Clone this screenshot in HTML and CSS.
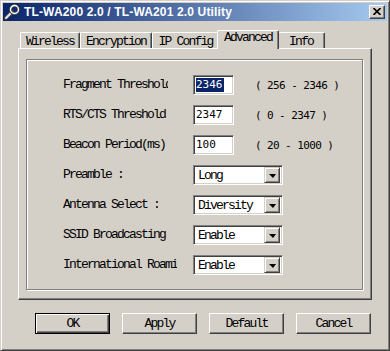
FILE: index.html
```html
<!DOCTYPE html>
<html lang="en">
<head>
    <meta charset="UTF-8">
    <title>TL-WA200 2.0 / TL-WA201 2.0 Utility</title>
    <link rel="stylesheet" href="styles.css">
</head>
<body>
    <div class="window">
        <div class="titlebar">
            <svg class="app-icon" width="16" height="16" viewBox="0 0 16 16">
                <path d="M2 14 L8 8" stroke="#404040" stroke-width="4" stroke-linecap="round"/>
                <path d="M2 14 L8 8" stroke="#e8e8e8" stroke-width="2" stroke-linecap="round"/>
                <circle cx="10.5" cy="5.5" r="4" fill="none" stroke="#404040" stroke-width="3"/>
                <circle cx="10.5" cy="5.5" r="4" fill="none" stroke="#ffffff" stroke-width="1.4"/>
            </svg>
            <span class="title">TL-WA200 2.0 / TL-WA201 2.0 Utility</span>
            <div class="close">
                <svg width="8" height="7" viewBox="0 0 8 7">
                    <path d="M0.5 0 L7.5 7 M7.5 0 L0.5 7" stroke="#000" stroke-width="1.6"/>
                </svg>
            </div>
        </div>

        <div class="content">
            <div class="tabs">
                <div class="tab t-wireless">Wireless</div>
                <div class="tab t-encryption">Encryption</div>
                <div class="tab t-ip">IP Config</div>
                <div class="tab t-advanced active">Advanced</div>
                <div class="tab t-info">Info</div>
            </div>

            <div class="sheet">
                <div class="group">
                    <div class="row">
                        <span class="label clip-frag">Fragment Threshold</span>
                        <div class="field sunken"><span class="selected">2346</span></div>
                        <span class="range">( 256 - 2346 )</span>
                    </div>
                    <div class="row">
                        <span class="label">RTS/CTS Threshold</span>
                        <div class="field sunken">2347</div>
                        <span class="range">( 0 - 2347 )</span>
                    </div>
                    <div class="row">
                        <span class="label">Beacon Period(ms)</span>
                        <div class="field sunken">100</div>
                        <span class="range">( 20 - 1000 )</span>
                    </div>
                    <div class="row">
                        <span class="label">Preamble :</span>
                        <div class="combo sunken"><span class="combo-text">Long</span><span class="drop"><i></i></span></div>
                    </div>
                    <div class="row">
                        <span class="label">Antenna Select :</span>
                        <div class="combo sunken"><span class="combo-text">Diversity</span><span class="drop"><i></i></span></div>
                    </div>
                    <div class="row">
                        <span class="label">SSID Broadcasting</span>
                        <div class="combo sunken"><span class="combo-text">Enable</span><span class="drop"><i></i></span></div>
                    </div>
                    <div class="row">
                        <span class="label">International Roaming</span>
                        <div class="combo sunken"><span class="combo-text">Enable</span><span class="drop"><i></i></span></div>
                    </div>
                </div>
            </div>

            <div class="buttons">
                <button class="btn default">OK</button>
                <button class="btn">Apply</button>
                <button class="btn">Default</button>
                <button class="btn">Cancel</button>
            </div>
        </div>
    </div>
</body>
</html>
```

FILE: styles.css
```css
body {
    margin: 0;
    padding: 0;
    background: #d4d0c8;
}
.window {
    width: 390px;
    height: 351px;
    box-sizing: border-box;
    background: #d4d0c8;
    border: 1px solid;
    border-color: #d4d0c8 #404040 #404040 #d4d0c8;
    box-shadow: inset 1px 1px #fff, inset -1px -1px #808080;
    padding: 2px;
    font-family: "Liberation Mono", "Courier New", monospace;
    font-size: 13px;
    letter-spacing: -1.8px;
    color: #000;
}
.titlebar {
    height: 18px;
    display: flex;
    align-items: center;
    background: linear-gradient(to right, #0a246a, #a6caf0);
}
.app-icon {
    margin-left: 1px;
    flex: none;
}
.title {
    margin-left: 4px;
    font-family: "Liberation Sans", Arial, sans-serif;
    font-weight: bold;
    font-size: 12px;
    letter-spacing: 0.15px;
    color: #fff;
    flex: 1;
    white-space: nowrap;
}
.close {
    width: 16px;
    height: 14px;
    box-sizing: border-box;
    margin-right: 2px;
    background: #d4d0c8;
    border: 1px solid;
    border-color: #fff #404040 #404040 #fff;
    box-shadow: inset -1px -1px #808080;
    display: flex;
    align-items: center;
    justify-content: center;
    padding: 0 1px 1px 0;
}
.content {
    padding: 9px 0 0 15px;
}

/* tab strip */
.tabs {
    display: flex;
    align-items: flex-end;
    height: 18px;
    padding-left: 2px;
}
.tab {
    height: 16px;
    box-sizing: border-box;
    border-top: 1px solid #fff;
    border-left: 1px solid #fff;
    border-right: 1px solid #404040;
    box-shadow: inset -1px 0 #808080;
    border-radius: 2px 2px 0 0;
    text-align: center;
    line-height: 15px;
    padding-top: 1px;
}
.t-wireless { width: 60px; }
.t-encryption { width: 72px; }
.t-ip { width: 67px; }
.t-advanced { width: 58px; }
.t-info { width: 48px; }
.tab.active {
    position: relative;
    z-index: 1;
    width: 62px;
    height: 19px;
    margin: 0 -2px -1px -2px;
    background: #d4d0c8;
    line-height: 14px;
    padding-top: 0;
}

.sheet {
    width: 354px;
    height: 252px;
    box-sizing: border-box;
    border: 1px solid;
    border-color: #fff #404040 #404040 #fff;
    box-shadow: inset -1px -1px #808080;
    padding: 10px 0 0 7px;
}
.group {
    width: 337px;
    height: 231px;
    box-sizing: border-box;
    border: 1px solid #808080;
    box-shadow: inset 1px 1px #fff, 1px 1px #fff;
    padding: 15px 0 0 36px;
}
.row {
    display: flex;
    align-items: center;
    height: 20px;
    margin-bottom: 10px;
}
.label {
    width: 114px;
    margin-right: 16px;
    white-space: nowrap;
    overflow: hidden;
    line-height: 20px;
}
.label.clip-frag {
    width: 105px;
    margin-right: 25px;
}
.sunken {
    box-sizing: border-box;
    height: 20px;
    background: #fff;
    border: 1px solid;
    border-color: #808080 #fff #fff #808080;
    box-shadow: inset 1px 1px #404040, inset -1px -1px #d4d0c8;
}
.field {
    width: 41px;
    padding: 2px 0 0 2px;
    font-family: "DejaVu Sans Mono", monospace;
    font-size: 11px;
    letter-spacing: 0;
    line-height: 14px;
}
.selected {
    background: #0a246a;
    color: #fff;
    display: inline-block;
    padding-right: 1px;
}
.range {
    margin-left: 21px;
    font-family: "DejaVu Sans Mono", monospace;
    font-size: 11px;
    letter-spacing: -0.6px;
    white-space: pre;
}
.combo {
    width: 90px;
    display: flex;
    align-items: center;
    padding: 2px;
}
.combo-text {
    flex: 1;
    padding-left: 2px;
}
.drop {
    width: 16px;
    height: 16px;
    box-sizing: border-box;
    background: #d4d0c8;
    border: 1px solid;
    border-color: #d4d0c8 #404040 #404040 #d4d0c8;
    box-shadow: inset 1px 1px #fff, inset -1px -1px #808080;
    display: flex;
    align-items: center;
    justify-content: center;
}
.drop i {
    width: 0;
    height: 0;
    border-left: 4px solid transparent;
    border-right: 3px solid transparent;
    border-top: 4px solid #000;
    margin-top: 1px;
}

/* bottom buttons */
.buttons {
    display: flex;
    gap: 12px;
    padding: 13px 0 0 17px;
}
.btn {
    width: 75px;
    height: 21px;
    box-sizing: border-box;
    margin: 0;
    padding: 0;
    background: #d4d0c8;
    border: 1px solid;
    border-color: #fff #404040 #404040 #fff;
    box-shadow: inset -1px -1px #808080;
    font-family: "Liberation Mono", "Courier New", monospace;
    font-size: 13px;
    letter-spacing: -1.8px;
    color: #000;
}
.btn.default {
    border: 1px solid #000;
    box-shadow: inset 1px 1px #fff, inset -1px -1px #404040, inset -2px -2px #808080;
}
```
